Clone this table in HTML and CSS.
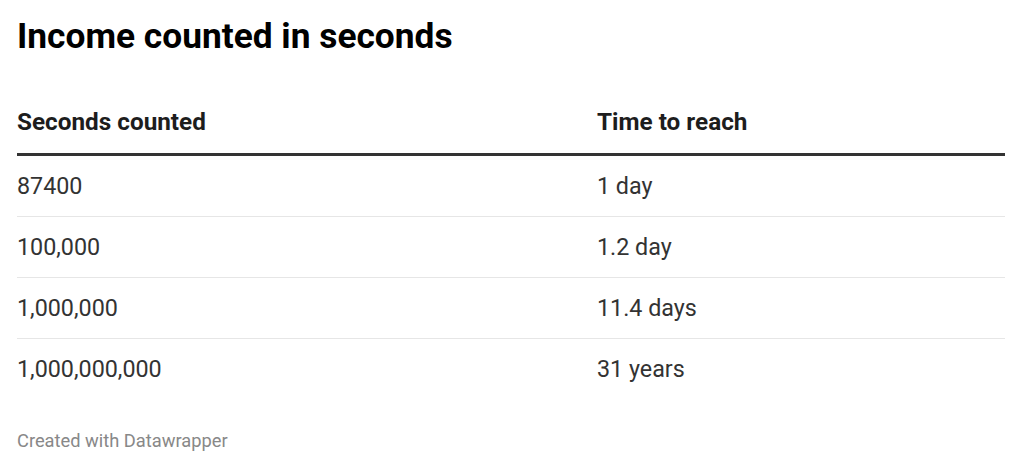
FILE: index.html
```html
<!DOCTYPE html>
<html lang="en">
<head>
<meta charset="utf-8">
<title>Income counted in seconds</title>
<link rel="stylesheet" href="styles.css">
</head>
<body>
<main class="chart">
  <h1 class="title">Income counted in seconds</h1>
  <div class="table">
    <div class="row head">
      <div class="cell">Seconds counted</div>
      <div class="cell">Time to reach</div>
    </div>
    <div class="row">
      <div class="cell">87400</div>
      <div class="cell">1 day</div>
    </div>
    <div class="row">
      <div class="cell">100,000</div>
      <div class="cell">1.2 day</div>
    </div>
    <div class="row">
      <div class="cell">1,000,000</div>
      <div class="cell">11.4 days</div>
    </div>
    <div class="row last">
      <div class="cell">1,000,000,000</div>
      <div class="cell">31 years</div>
    </div>
  </div>
  <footer class="footer">Created with Datawrapper</footer>
</main>
</body>
</html>
```

FILE: styles.css
```css
html, body {
  margin: 0;
  padding: 0;
  background: #fff;
}

body {
  font-family: Roboto, "Liberation Sans", Arial, sans-serif;
  color: #333;
}

.chart {
  padding: 14px 17px 0 17px;
}

.title {
  margin: 0;
  font-size: 35.3px;
  line-height: 44px;
  font-weight: 700;
  color: #000;
}

.table {
  margin-top: 50px;
  display: flex;
  flex-direction: column;
}

.row {
  display: grid;
  grid-template-columns: 580px 1fr;
  height: 60px;
  line-height: 60px;
  font-size: 23.3px;
  border-bottom: 1px solid #e6e6e6;
}

.row.last {
  border-bottom: none;
}

.row.head {
  height: auto;
  line-height: 28px;
  font-size: 24.3px;
  font-weight: 700;
  color: #1d1d1d;
  padding-bottom: 17px;
  border-bottom: 3px solid #333;
}

.footer {
  margin-top: 32px;
  font-size: 18.3px;
  line-height: 20px;
  color: #888;
}
```
